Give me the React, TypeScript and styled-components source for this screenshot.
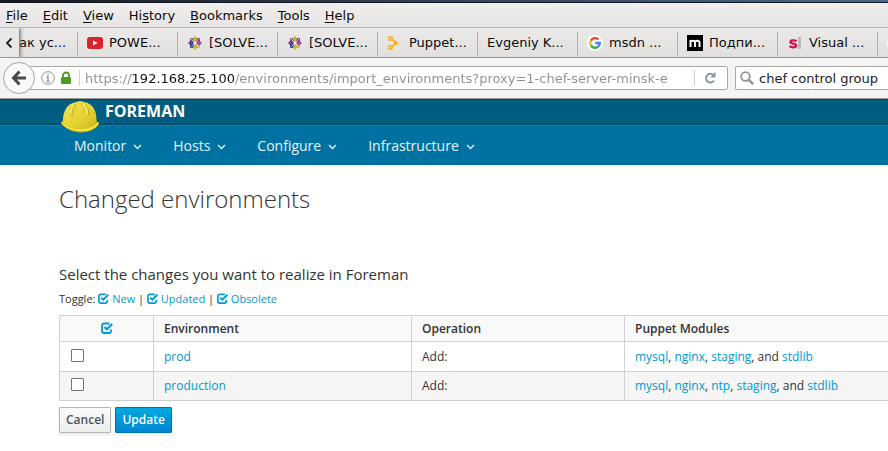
import React from "react";
import styled, { createGlobalStyle } from "styled-components";

const GlobalStyle = createGlobalStyle`
  *, *::before, *::after { box-sizing: border-box; }
  body {
    margin: 0;
    background: #fff;
    color: #333;
    font-family: "Open Sans", sans-serif;
    font-size: 12px;
    overflow-x: hidden;
  }
  button, input { font-family: inherit; }
`;

/* ---------- browser window ---------- */

const Chrome = styled.header`
  font-family: "DejaVu Sans", sans-serif;
  font-size: 13px;
  line-height: 16px;
  color: #0c0c0c;
`;

const TitleEdge = styled.div`
  height: 3px;
  background: linear-gradient(90deg, #16181b, #2b3340 30%, #50668a);
  border-bottom: 1px solid #101722;
`;

const MenuBar = styled.nav`
  display: flex;
  gap: 15px;
  height: 25px;
  padding: 5px 6px 3px;
  background: linear-gradient(#f0efee, #e6e5e3);
  border-bottom: 1px solid #bab9b7;
`;

const MenuItem = styled.button`
  padding: 0;
  border: 0;
  background: none;
  color: inherit;
  font-size: 13px;
  line-height: 16px;
  u { text-underline-offset: 2px; }
`;

const TabStrip = styled.div`
  display: flex;
  height: 30px;
  overflow: hidden;
  background: linear-gradient(#ebeae9, #e1e0de);
  border-bottom: 1px solid #989794;
`;

const ScrollButton = styled.button`
  flex: none;
  width: 19px;
  padding: 0 0 0 5px;
  border: 0;
  background: #e8e7e6;
  box-shadow: 1px 0 4px #555;
  z-index: 1;
  svg { display: block; }
`;

const Tab = styled.button<{ $first?: boolean }>`
  flex: none;
  display: flex;
  align-items: center;
  justify-content: flex-start;
  gap: 6px;
  width: ${(p) => (p.$first ? "59px" : "100px")};
  padding: ${(p) => (p.$first ? "1px 0 0" : "1px 0 0 9px")};
  border: 0;
  border-right: 1px solid;
  border-image: linear-gradient(transparent 5px, #b1b0ae 5px 27px, transparent 27px) 1;
  background: none;
  color: inherit;
  font-size: 13px;
  line-height: 16px;
  white-space: nowrap;
  svg { flex: none; display: block; }
`;

const Toolbar = styled.div`
  display: flex;
  align-items: center;
  height: 41px;
  padding-left: 3px;
  background: #f4f4f2;
  border-bottom: 1px solid #999895;
  overflow: hidden;
`;

const BackButton = styled.button`
  flex: none;
  display: grid;
  place-items: center;
  width: 32px;
  height: 32px;
  padding: 0;
  border: 1px solid #a5a4a2;
  border-radius: 50%;
  background: #f9f9f8;
  z-index: 1;
`;

const Field = styled.div<{ $kind: "url" | "search" }>`
  display: flex;
  align-items: center;
  height: 24px;
  background: #fff;
  border: 1px solid #aaa9a7;
  ${(p) =>
    p.$kind === "url"
      ? `flex: 1; min-width: 0; margin-left: -6px; padding-left: 11px; gap: 5px; border-radius: 0 2px 2px 0;`
      : `flex: none; width: 153px; margin-left: 7px; padding-left: 4px; gap: 5px; border-right: 0; border-radius: 2px 0 0 2px;`}
  svg { flex: none; display: block; }
`;

const Divider = styled.span<{ $end?: boolean }>`
  flex: none;
  width: 1px;
  height: 16px;
  margin-left: ${(p) => (p.$end ? "20px" : "2px")};
  background: #d0d0d0;
`;

const TextInput = styled.input`
  flex: 1;
  min-width: 0;
  height: 20px;
  padding: 0;
  border: 0;
  outline: 0;
  background: transparent;
  color: #222;
  font-size: 13px;
`;

const UrlInput = styled(TextInput)`
  color: #8f8f8f;
  background: linear-gradient(90deg, #8f8f8f 46px, #111 46px 149px, #8f8f8f 149px);
  background-clip: text;
  -webkit-background-clip: text;
  -webkit-text-fill-color: transparent;
`;

const PlainButton = styled.button`
  flex: none;
  width: 27px;
  height: 20px;
  padding: 0 8px 0 0;
  border: 0;
  background: none;
  svg { margin: 0 auto; }
`;

/* ---------- site header ---------- */

const BrandBar = styled.div`
  display: flex;
  gap: 5px;
  height: 26px;
  padding-left: 60px;
  background: #005c80;
  border-top: 1px solid #00476a;
  border-bottom: 1px solid #004a67;
  svg { flex: none; position: relative; z-index: 1; }
`;

const Brand = styled.a`
  color: #fff;
  font-size: 16px;
  font-weight: 700;
  line-height: 22px;
  text-decoration: none;
`;

const SiteNav = styled.nav`
  display: flex;
  gap: 31px;
  height: 40px;
  padding-left: 74px;
  background: #0072a2;
  border-top: 1px solid #1583b0;
`;

const SiteNavItem = styled.button`
  display: flex;
  align-items: center;
  gap: 7px;
  padding: 0;
  border: 0;
  background: none;
  color: #e4f2f8;
  font-size: 14px;
  line-height: 20px;
  svg { display: block; margin-top: 3px; }
`;

/* ---------- page ---------- */

const Main = styled.main`
  padding: 17px 0 18px 59px;
`;

const Title = styled.h1`
  margin: 0;
  font-size: 24px;
  font-weight: 300;
  line-height: 34px;
`;

const Subtitle = styled.h2`
  margin: 48px 0 0;
  font-size: 15px;
  font-weight: 400;
  line-height: 20px;
`;

const ToggleLine = styled.p`
  margin: 7px 0 8px;
  font-size: 11px;
  line-height: 16px;
`;

const Link = styled.a`
  color: #0099d3;
  text-decoration: none;
  svg { vertical-align: -1px; }
`;

const Table = styled.table`
  width: 100%;
  border-collapse: collapse;
  table-layout: fixed;
  line-height: 18px;
  th, td {
    padding: 4px 10px 3px;
    border: 1px solid #d1d1d1;
    text-align: left;
  }
  th { background: #f9f9f9; font-weight: 600; }
  td { padding: 6px 10px 5px; }
  tbody tr:last-child td { padding: 5px 10px; }
  th:last-child, td:last-child { border-right: 0; }
  th:first-child { text-align: center; }
  tbody tr:nth-child(even) { background: #f5f5f5; }
`;

const Col = styled.col<{ $w?: number }>`
  width: ${(p) => (p.$w ? p.$w + "px" : "auto")};
`;

const Check = styled.input`
  appearance: none;
  display: block;
  width: 13px;
  height: 13px;
  margin: 0 0 3px 1px;
  border: 1px solid #77746f;
  border-radius: 1px;
  background: #fff;
  &:checked { background: #0099d3; }
`;

const Actions = styled.div`
  display: flex;
  gap: 4px;
  margin-top: 6px;
`;

const Button = styled.button<{ $primary?: boolean }>`
  height: 26px;
  padding: 0 6px;
  border: 1px solid ${(p) => (p.$primary ? "#0076a8" : "#b7b7b7")};
  border-radius: 1px;
  background: ${(p) => (p.$primary ? "linear-gradient(#00a8e1, #0085cf)" : "linear-gradient(#fafafa, #ededed)")};
  box-shadow: 0 2px 3px rgba(3, 3, 3, 0.1);
  color: ${(p) => (p.$primary ? "#fff" : "#4d5258")};
  font-size: 12px;
  font-weight: 600;
  line-height: 18px;
`;

/* ---------- drawings ---------- */

const YouTube = () => (
  <svg width="16" height="16" viewBox="0 0 16 16">
    <rect y="2" width="16" height="12" rx="3" fill="#d9252a" />
    <path d="M6 5.5v5l4.5-2.5z" fill="#fff" />
  </svg>
);

const CentOS = () => (
  <svg width="16" height="16" viewBox="0 0 16 16">
    <path d="M3 3h4v4H3z" fill="#a63a8c" />
    <path d="M9 3h4v4H9z" fill="#8a2a86" />
    <path d="M3 9h4v4H3z" fill="#2c2b80" />
    <path d="M9 9h4v4H9z" fill="#efa724" />
    <path d="M8 1l2.500 2.500L8 7.500 5.500 3.500z" fill="#a8c832" />
    <path d="M15 8l-2.500 2.500L8.500 8l4-2.500z" fill="#a14f9c" />
    <path d="M8 15l-2.500-2.500L8 8.500l2.500 4z" fill="#b9c23a" />
    <path d="M1 8l2.500-2.500L7.500 8l-4 2.500z" fill="#4c4a9c" />
    <path d="M3.500 3.500l9 9M12.500 3.500l-9 9" stroke="#f6e6c8" strokeWidth="0.800" />
    <circle cx="8" cy="8" r="1.200" fill="#f8f4ee" />
  </svg>
);

const PuppetIcon = () => (
  <svg width="16" height="16" viewBox="0 0 16 16" fill="none" stroke="#ffae1a">
    <path d="M4 3l5 5-5 5" strokeWidth="1.500" />
    <rect x="2" y="2" width="3" height="3" fill="#ebeae9" strokeWidth="1.500" />
    <rect x="2" y="11" width="3" height="3" fill="#ebeae9" strokeWidth="1.500" />
    <path d="M7 6.500h3v3H7z" fill="#ffae1a" />
  </svg>
);

const Google = () => (
  <svg width="16" height="16" viewBox="0 0 16 16">
    <circle cx="8" cy="8" r="8" fill="#fff" />
    <g fill="none" strokeWidth="2.400">
      <path d="M11.500 4.500A4.800 4.800 0 0 0 3.900 5.600" stroke="#ea4335" />
      <path d="M3.900 5.600a4.800 4.800 0 0 0 0 4.800" stroke="#fbbc05" />
      <path d="M3.900 10.400a4.800 4.800 0 0 0 7.300 1.200" stroke="#34a853" />
      <path d="M11.200 11.600A4.800 4.800 0 0 0 12.800 8H8.200" stroke="#4285f4" />
    </g>
  </svg>
);

const MIcon = () => (
  <svg width="16" height="16" viewBox="0 0 16 16">
    <rect width="16" height="16" fill="#000" />
    <path d="M3.500 12V5M3.500 7.500c0-2 4.500-2.500 4.500 0V12M8 7.500c0-2 4.500-2.500 4.500 0V12" fill="none" stroke="#fff" strokeWidth="2" />
  </svg>
);

const SlIcon = () => (
  <svg width="16" height="16" viewBox="0 0 16 16" fill="none">
    <path d="M9.500 6.200C7 4.800 3.300 5.200 3.500 7.200c.2 2 5.500.8 5.500 3.300 0 2.400-4.500 2.400-6.500.7" stroke="#c91450" strokeWidth="2.400" />
    <path d="M12.500 2v12" stroke="#b4b8bc" strokeWidth="2.800" />
  </svg>
);

const WhiteDisc = () => (
  <svg width="16" height="16" viewBox="0 0 16 16"><circle cx="8" cy="8" r="8" fill="#fff" /></svg>
);

const CheckIcon = ({ size }: { size: number }) => (
  <svg width={size} height={size} viewBox="0 0 12 12" fill="none" stroke="#0099d3">
    <path d="M8.500 1.500H3A2 2 0 0 0 1 3.500V9a2 2 0 0 0 2 2h5a2 2 0 0 0 2-2V7.500" strokeWidth="1.800" />
    <path d="M3.500 5l2.300 2.300L11.200 1.900" strokeWidth="2.100" />
  </svg>
);

const Chevron = () => (
  <svg width="9" height="6" viewBox="0 0 9 6" fill="none" stroke="#e4f2f8" strokeWidth="1.400">
    <path d="M1 1l3.500 3.500L8 1" />
  </svg>
);

const Helmet = () => (
  <svg width="40" height="34" viewBox="0 0 40 34">
    <defs>
      <linearGradient id="shell" x1="0" y1="0" x2="1" y2="1">
        <stop offset="0" stopColor="#f0e35a" />
        <stop offset=".5" stopColor="#e8d636" />
        <stop offset="1" stopColor="#d2b81c" />
      </linearGradient>
    </defs>
    <path d="M1.500 22.500c3 6 11 10 19 10s15-3.500 18.500-8.500l-1-2-4-2H3z" fill="#b79f14" />
    <path d="M3 22C2.500 12 7 3.500 16 2l4-1 4 1c9 1.500 13 9 12.500 20-4 5-10 7-16.500 7S6 27 3 22z" fill="url(#shell)" />
    <path d="M1.500 21.500c4 5 11 7.500 19 7.500s14-3 17-7l1.500 1c-2 5-9 8.500-18 8.500s-17-4-20-8.500z" fill="#f2e33c" />
    <path d="M13.500 4c-3.500 3-4 7-3 12l3 .5c-1-5 0-9 3-12.500zM23 3.500c3 3 4.500 7 4 12l3-.5c0-5-1.500-8.500-5-11.500z" fill="#cdb828" />
    <path d="M14 4.500c-2.500 3-3.500 6-3 10M23.500 4c2.500 3 4 6 4 10" fill="none" stroke="#f8f08e" strokeWidth="1.300" />
    <path d="M17 3c-2 3-2.500 6-2 10M21 3c2 3 3 6 3 10" fill="none" stroke="#dcc82c" strokeWidth="1" />
  </svg>
);

/* ---------- data ---------- */

const menus: [string, string, string][] = [
  ["", "F", "ile"], ["", "E", "dit"], ["", "V", "iew"], ["Hi", "s", "tory"],
  ["", "B", "ookmarks"], ["", "T", "ools"], ["", "H", "elp"],
];

const tabs: { label: string; icon?: React.ReactNode }[] = [
  { label: "POWE...", icon: <YouTube /> },
  { label: "[SOLVE...", icon: <CentOS /> },
  { label: "[SOLVE...", icon: <CentOS /> },
  { label: "Puppet...", icon: <PuppetIcon /> },
  { label: "Evgeniy K..." },
  { label: "msdn ...", icon: <Google /> },
  { label: "Подпи...", icon: <MIcon /> },
  { label: "Visual ...", icon: <SlIcon /> },
  { label: "", icon: <WhiteDisc /> },
];

const rows = [
  { env: "prod", modules: ["mysql", "nginx", "staging", "stdlib"] },
  { env: "production", modules: ["mysql", "nginx", "ntp", "staging", "stdlib"] },
];

const ModuleList = ({ names }: { names: string[] }) => (
  <>
    {names.map((name, i) => (
      <React.Fragment key={name}>
        {i > 0 && (i === names.length - 1 ? ", and " : ", ")}
        <Link href="#">{name}</Link>
      </React.Fragment>
    ))}
  </>
);

export default function App() {
  return (
    <>
      <GlobalStyle />
      <Chrome>
        <TitleEdge />
        <MenuBar>
          {menus.map(([a, key, b]) => (
            <MenuItem key={key + b}>{a}<u>{key}</u>{b}</MenuItem>
          ))}
        </MenuBar>
        <TabStrip>
          <ScrollButton aria-label="Scroll tabs left">
            <svg width="8" height="12" viewBox="0 0 8 12" fill="none" stroke="#222" strokeWidth="1.800"><path d="M6.500 1.500L2 6l4.500 4.500" /></svg>
          </ScrollButton>
          <Tab $first>ак ус...</Tab>
          {tabs.map((t, i) => (
            <Tab key={i} aria-label={t.label || "Tab"}>{t.icon}{t.label}</Tab>
          ))}
        </TabStrip>
        <Toolbar>
          <BackButton aria-label="Back">
            <svg width="16" height="16" viewBox="0 0 16 16" fill="none" stroke="#4a4a4a" strokeWidth="3"><path d="M15 8H3M8.500 1.500L2.500 8l6 6.500" /></svg>
          </BackButton>
          <Field $kind="url">
            <svg width="14" height="14" viewBox="0 0 14 14" fill="none" stroke="#8d8d8d"><circle cx="7" cy="7" r="6.300" /><path d="M5.500 6H7v4.500M5.500 10.500h3M7 3v1.500" strokeWidth="1.300" /></svg>
            <svg width="12" height="14" viewBox="0 0 12 14"><rect x="1" y="6" width="10" height="7" rx="1" fill="#4d9a26" /><path d="M3 7V4.500a3 3 0 0 1 6 0V7" fill="none" stroke="#4d9a26" strokeWidth="1.800" /></svg>
            <Divider />
            <UrlInput aria-label="Address" defaultValue="https://192.168.25.100/environments/import_environments?proxy=1-chef-server-minsk-epam" />
            <Divider $end />
            <PlainButton aria-label="Reload">
              <svg width="14" height="14" viewBox="0 0 14 14"><path d="M10.500 4.200A4.300 4.300 0 1 0 11 9.500" fill="none" stroke="#8797a5" strokeWidth="2" /><path d="M12.500 1v5.500H7z" fill="#8797a5" /></svg>
            </PlainButton>
          </Field>
          <Field $kind="search">
            <svg width="14" height="14" viewBox="0 0 14 14" fill="none" stroke="#929292"><circle cx="5.500" cy="5.500" r="4.300" strokeWidth="1.800" /><path d="M8.800 8.800l4.400 4.400" strokeWidth="2.400" /></svg>
            <TextInput aria-label="Search" defaultValue="chef control group" />
          </Field>
        </Toolbar>
      </Chrome>

      <BrandBar>
        <Helmet />
        <Brand href="#">FOREMAN</Brand>
      </BrandBar>
      <SiteNav>
        {["Monitor", "Hosts", "Configure", "Infrastructure"].map((n) => (
          <SiteNavItem key={n}>{n}<Chevron /></SiteNavItem>
        ))}
      </SiteNav>

      <Main>
        <Title>Changed environments</Title>
        <Subtitle>Select the changes you want to realize in Foreman</Subtitle>
        <ToggleLine>
          Toggle: <Link href="#"><CheckIcon size={11} /> New</Link> | <Link href="#"><CheckIcon size={11} /> Updated</Link> | <Link href="#"><CheckIcon size={11} /> Obsolete</Link>
        </ToggleLine>
        <Table>
          <colgroup><Col $w={94} /><Col $w={258} /><Col $w={213} /><Col /></colgroup>
          <thead>
            <tr>
              <th><Link href="#" aria-label="Toggle all"><CheckIcon size={12} /></Link></th>
              <th>Environment</th><th>Operation</th><th>Puppet Modules</th>
            </tr>
          </thead>
          <tbody>
            {rows.map((r) => (
              <tr key={r.env}>
                <td><Check type="checkbox" aria-label={r.env} /></td>
                <td><Link href="#">{r.env}</Link></td>
                <td>Add:</td>
                <td><ModuleList names={r.modules} /></td>
              </tr>
            ))}
          </tbody>
        </Table>
        <Actions>
          <Button>Cancel</Button>
          <Button $primary>Update</Button>
        </Actions>
      </Main>
    </>
  );
}
